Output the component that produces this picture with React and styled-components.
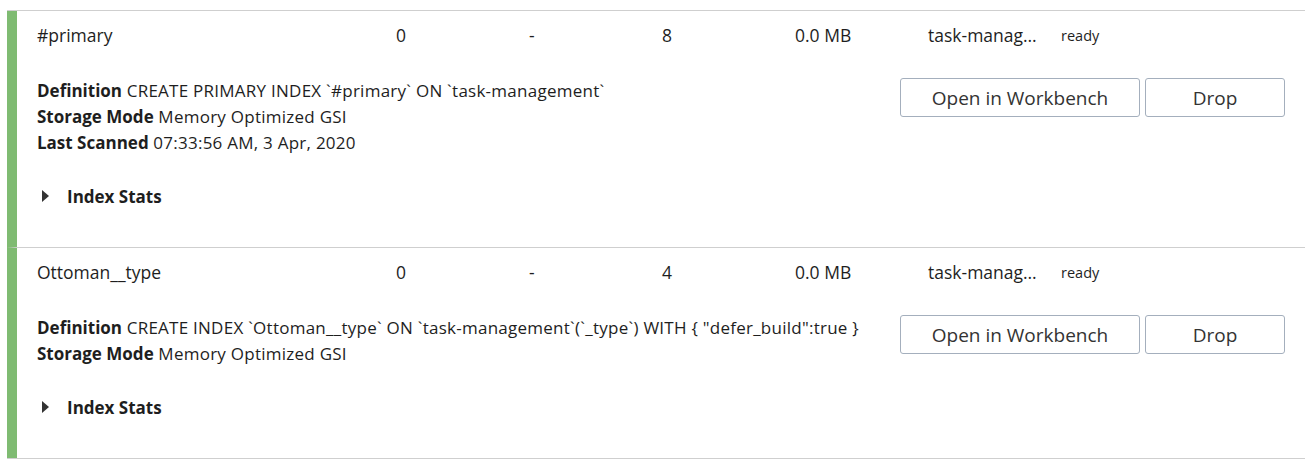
import React from "react";
import styled, { createGlobalStyle } from "styled-components";

const Global = createGlobalStyle`
  html, body { margin: 0; padding: 0; background: #fff; }
  body { font-family: "Open Sans", "Liberation Sans", sans-serif; color: #1e1e1e; }
`;

const Page = styled.div`
  padding: 10px 7px 0 7px;
  width: 1298px;
`;

const List = styled.div`
  border-top: 1px solid #cfcfcf;
  border-bottom: 1px solid #cfcfcf;
`;

const Row = styled.div`
  border-left: 10px solid #7fbb72;
  padding: 0 20px 38px 20px;
  & + & { border-top: 1px solid #cfcfcf; }
`;

const Header = styled.div`
  display: flex;
  align-items: center;
  height: 48px;
`;

const Cell = styled.div`
  width: ${(p) => p.$w || 133}px;
  flex: none;
  font-size: ${(p) => p.$size || 17.5}px;
  white-space: nowrap;
`;

const Details = styled.div`
  display: flex;
  justify-content: space-between;
  align-items: flex-start;
  padding-top: 19px;
`;

const Info = styled.div`
  font-size: 17px;
  line-height: 26px;
  letter-spacing: 0.25px;
`;

const Label = styled.span`
  font-weight: 700;
  letter-spacing: 0;
`;

const Stats = styled.div`
  display: flex;
  align-items: center;
  gap: 18px;
  margin-top: 27px;
  padding-left: 5px;
  height: 26px;
  font-size: 17px;
  font-weight: 700;
`;

const Arrow = styled.span`
  width: 0;
  height: 0;
  border-top: 6px solid transparent;
  border-bottom: 6px solid transparent;
  border-left: 7px solid #333;
`;

const Actions = styled.div`
  display: flex;
  gap: 5px;
`;

const Button = styled.button`
  width: ${(p) => p.$w}px;
  height: 39px;
  background: #fff;
  border: 1px solid #a4afbd;
  border-radius: 3px;
  font-family: "Open Sans", "Liberation Sans", sans-serif;
  font-size: 19px;
  color: #333;
  padding: 0;
`;

const rows = [
  {
    name: "#primary",
    items: "8",
    lines: [
      ["Definition", "CREATE PRIMARY INDEX `#primary` ON `task-management`"],
      ["Storage Mode", "Memory Optimized GSI"],
      ["Last Scanned", "07:33:56 AM, 3 Apr, 2020"],
    ],
  },
  {
    name: "Ottoman__type",
    items: "4",
    lines: [
      ["Definition", "CREATE INDEX `Ottoman__type` ON `task-management`(`_type`) WITH { \"defer_build\":true }"],
      ["Storage Mode", "Memory Optimized GSI"],
    ],
  },
];

export default function App() {
  return (
    <Page>
      <Global />
      <List>
        {rows.map((r) => (
          <Row key={r.name}>
            <Header>
              <Cell $w={359}>{r.name}</Cell>
              <Cell>0</Cell>
              <Cell>-</Cell>
              <Cell>{r.items}</Cell>
              <Cell>0.0 MB</Cell>
              <Cell>task-manag…</Cell>
              <Cell $size={14.5}>ready</Cell>
            </Header>
            <Details>
              <Info>
                {r.lines.map(([k, v]) => (
                  <div key={k}>
                    <Label>{k}</Label> {v}
                  </div>
                ))}
              </Info>
              <Actions>
                <Button $w={240}>Open in Workbench</Button>
                <Button $w={140}>Drop</Button>
              </Actions>
            </Details>
            <Stats>
              <Arrow />
              Index Stats
            </Stats>
          </Row>
        ))}
      </List>
    </Page>
  );
}
